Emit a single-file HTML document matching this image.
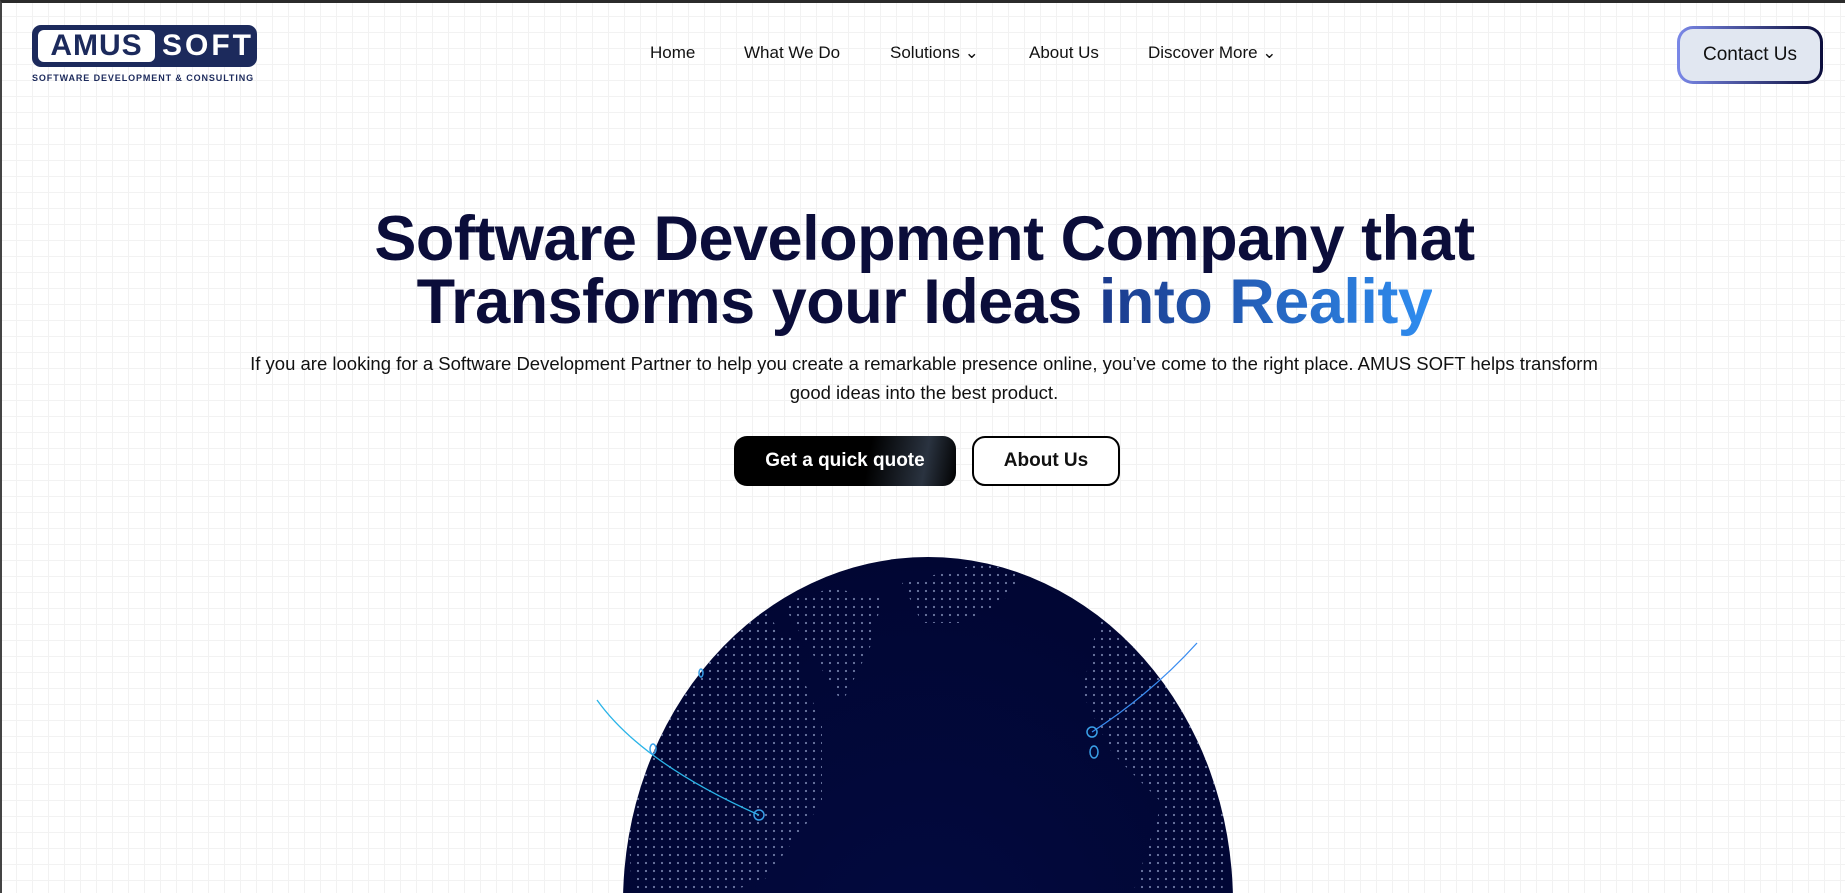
<!DOCTYPE html>
<html><head><meta charset="utf-8"><style>
*{margin:0;padding:0;box-sizing:border-box}
html,body{width:1845px;height:893px;overflow:hidden}
body{font-family:"Liberation Sans",sans-serif;background:#fff;position:relative;
background-image:linear-gradient(#f2f2f2 1px,transparent 1px),linear-gradient(90deg,#f2f2f2 1px,transparent 1px);background-size:16px 16px;
border-top:3px solid #2b2b2b;border-left:2px solid #444}
.logo{position:absolute;left:30px;top:22px;width:225px;height:42px;background:#1c2a5c;border-radius:9px}
.logo .w{position:absolute;left:6px;top:5px;width:117px;height:32px;background:#fff;border-radius:6px;color:#1c2a5c;font:bold 30px/32px "Liberation Sans",sans-serif;text-align:center;letter-spacing:1px}
.logo .s{position:absolute;left:130px;top:5px;color:#fff;font:bold 30px/32px "Liberation Sans",sans-serif;letter-spacing:3px}
.tag{position:absolute;left:30px;top:70px;font:bold 9px "Liberation Sans",sans-serif;color:#1c2a5c;letter-spacing:0.9px}
.nav{position:absolute;top:40px;font-size:17px;color:#111}
.cta{position:absolute;left:1675px;top:23px;width:146px;height:58px;border-radius:16px;padding:3px;background:linear-gradient(90deg,#7a88e8,#0a0c3a)}
.cta div{width:100%;height:100%;background:#e1e7f1;border-radius:13px;font-size:19px;color:#111;text-align:center;line-height:52px}
h1{position:absolute;left:0;width:1845px;top:205px;text-align:center;font:bold 63px/63px "Liberation Sans",sans-serif;color:#0b0d3a;letter-spacing:-0.5px}
h1 span{background:linear-gradient(90deg,#1b3a8c,#2f8df0);-webkit-background-clip:text;color:transparent}
p{position:absolute;left:227px;width:1390px;top:346px;text-align:center;font-size:18.5px;line-height:29px;color:#111}
.b1{position:absolute;left:732px;top:433px;width:222px;height:50px;border-radius:13px;background:linear-gradient(100deg,#000 60%,#2a3340 85%,#000);color:#fff;font-size:19px;font-weight:bold;text-align:center;line-height:50px}
.b2{position:absolute;left:970px;top:433px;width:148px;height:50px;border-radius:13px;border:2px solid #000;background:#fff;color:#111;font-size:19px;font-weight:bold;text-align:center;line-height:46px}
svg{display:block}
</style></head><body>
<div class="logo"><div class="w">AMUS</div><div class="s">SOFT</div></div>
<div class="tag">SOFTWARE DEVELOPMENT &amp; CONSULTING</div>
<div class="nav" style="left:648px">Home</div>
<div class="nav" style="left:742px">What We Do</div>
<div class="nav" style="left:888px">Solutions ⌄</div>
<div class="nav" style="left:1027px">About Us</div>
<div class="nav" style="left:1146px">Discover More ⌄</div>
<div class="cta"><div>Contact Us</div></div>
<h1>Software Development Company that<br>Transforms your Ideas <span>into Reality</span></h1>
<p>If you are looking for a Software Development Partner to help you create a remarkable presence online, you’ve come to the right place. AMUS SOFT helps transform good ideas into the best product.</p>
<div class="b1">Get a quick quote</div>
<div class="b2">About Us</div>
<svg style="position:absolute;left:0;top:0" width="1843" height="890">
<defs>
<pattern id="d" width="8" height="8" patternUnits="userSpaceOnUse"><circle cx="4" cy="4" r="1.1" fill="#8a97c0"/></pattern>
<clipPath id="c"><ellipse cx="926" cy="900" rx="305" ry="346"/></clipPath>
<radialGradient id="g" cx="0.5" cy="0.6" r="0.6"><stop offset="0" stop-color="#020a40"/><stop offset="1" stop-color="#010633"/></radialGradient>
</defs>
<ellipse cx="926" cy="900" rx="305" ry="346" fill="url(#g)"/>
<g clip-path="url(#c)" fill="url(#d)" opacity="0.8">
<path d="M620 700 Q650 620 720 590 L760 600 L790 650 L820 720 L820 800 L760 880 L700 893 L630 893 Z"/>
<path d="M780 600 L830 585 L880 595 L870 640 L840 700 L810 650 Z"/>
<path d="M900 580 L980 560 L1020 570 L1000 600 L960 620 L920 620 Z"/>
<path d="M1100 600 L1160 610 L1200 660 L1230 760 L1220 893 L1130 893 L1160 800 L1110 750 L1080 690 Z"/>
<path d="M760 620 L800 640 L800 700 L770 720 Z"/>
</g>
<path d="M595 697 Q640 760 757 812" stroke="#2ab4e8" stroke-width="1.3" fill="none"/>
<circle cx="757" cy="812" r="5" fill="none" stroke="#3aa0e8" stroke-width="1.5"/>
<path d="M1195 640 Q1150 690 1090 729" stroke="#3a8cf0" stroke-width="1.3" fill="none"/>
<circle cx="1090" cy="729" r="5" fill="none" stroke="#3aa0e8" stroke-width="1.5"/>
<ellipse cx="1092" cy="749" rx="4" ry="6" fill="none" stroke="#3aa0e8" stroke-width="1.5"/>
<ellipse cx="651" cy="746" rx="3" ry="5" fill="none" stroke="#3aa0e8" stroke-width="1.5"/>
<ellipse cx="699" cy="670" rx="2" ry="4" fill="none" stroke="#3aa0e8" stroke-width="1.5"/>
</svg>
</body></html>
